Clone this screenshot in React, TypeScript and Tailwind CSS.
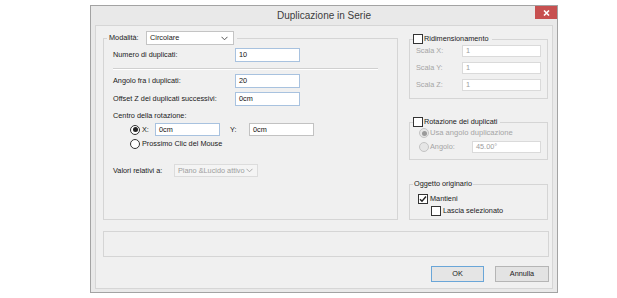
import React from "react";

const font = "font-['Liberation_Sans',Arial,sans-serif]";

function Check({ checked = false, disabled = false }: { checked?: boolean; disabled?: boolean }) {
  return (
    <span
      className={`flex items-center justify-center w-[10px] h-[10px] border bg-white shrink-0 ${
        disabled ? "border-[#bcbcbc]" : "border-[#333333]"
      }`}
    >
      {checked && (
        <svg width="8" height="8" viewBox="0 0 8 8">
          <path d="M1 4.2 L3 6.3 L7 1.5" fill="none" stroke="#222" strokeWidth="1.4" />
        </svg>
      )}
    </span>
  );
}

function Radio({ selected = false, disabled = false }: { selected?: boolean; disabled?: boolean }) {
  return (
    <span
      className={`flex items-center justify-center w-[10px] h-[10px] rounded-full border shrink-0 ${
        disabled ? "border-[#c4c4c4] bg-[#e6e6e6]" : "border-[#333333] bg-white"
      }`}
    >
      {selected && (
        <span className={`w-[5px] h-[5px] rounded-full ${disabled ? "bg-[#9a9a9a]" : "bg-[#222]"}`} />
      )}
    </span>
  );
}

function Chevron({ color = "#555" }: { color?: string }) {
  return (
    <svg width="7" height="5" viewBox="0 0 7 5">
      <path d="M0.5 0.8 L3.5 3.8 L6.5 0.8" fill="none" stroke={color} strokeWidth="1" />
    </svg>
  );
}

function Field({ value, w, blue = false, disabled = false, h = "h-[14px]" }: { value: string; w: string; blue?: boolean; disabled?: boolean; h?: string }) {
  return (
    <div
      className={`${w} ${h} bg-white border flex items-center pl-[3px] ${
        disabled ? "border-[#dadada] text-[#9d9d9d]" : blue ? "border-[#a8c2df] text-[#111]" : "border-[#c2c2c2] text-[#111]"
      }`}
    >
      {value}
    </div>
  );
}

export default function App() {
  return (
    <div className={`w-[617px] h-[298px] bg-white pt-[5px] pl-[90px] text-[7.3px] leading-none text-[#1a1a1a] ${font}`}>
      <div className="w-[468px] h-[288px] border border-[#a3a3a3] bg-[#e9e9e9] flex flex-col">
        {/* title bar */}
        <div className="relative h-[19px] shrink-0 flex items-center justify-center">
          <span className="text-[10px] text-[#3c3c3c]">Duplicazione in Serie</span>
          <div className="absolute right-0 top-0 w-[22px] h-[13px] bg-[#c75050] flex items-center justify-center">
            <svg width="7" height="6" viewBox="0 0 7 6">
              <path d="M1 0.5 L6 5.5 M6 0.5 L1 5.5" stroke="#fff" strokeWidth="1.6" />
            </svg>
          </div>
        </div>

        {/* client */}
        <div className="mx-[4px] mb-[3px] flex-1 border border-[#d6d6d6] bg-[#f0f0f0] pt-[5px] pl-[7px] pr-[4px] flex flex-col">
          <div className="flex gap-[11px] h-[189px]">
            {/* left group */}
            <fieldset className="w-[295px] h-[189px] border border-[#d5d5d5]">
              <legend className="ml-[3px] pl-[2px] pr-[3px] h-[14px] flex items-center">
                <span className="w-[37px]">Modalità:</span>
                <div className="w-[88px] h-[14px] bg-white border border-[#c4c4c4] flex items-center justify-between pl-[3px] pr-[5px]">
                  <span>Circolare</span>
                  <Chevron />
                </div>
              </legend>

              <div className="pl-[9px] pr-[19px] pt-[3px] flex flex-col">
                <div className="flex items-center">
                  <span className="w-[122px]">Numero di duplicati:</span>
                  <Field value="10" w="w-[65px]" blue />
                </div>
                <div className="mt-[6px] border-t border-[#d0d0d0] border-b border-b-white" />
                <div className="mt-[4px] flex items-center">
                  <span className="w-[122px]">Angolo fra i duplicati:</span>
                  <Field value="20" w="w-[65px]" blue />
                </div>
                <div className="mt-[4px] flex items-center">
                  <span className="w-[122px]">Offset Z dei duplicati successivi:</span>
                  <Field value="0cm" w="w-[65px]" blue />
                </div>
                <div className="mt-[5px] h-[10px] flex items-center">Centro della rotazione:</div>
                <div className="mt-[2px] pl-[17px] flex items-center">
                  <Radio selected />
                  <span className="ml-[2px] w-[13px]">X:</span>
                  <Field value="0cm" w="w-[65px]" blue h="h-[13px]" />
                  <span className="ml-[10px] w-[19px]">Y:</span>
                  <Field value="0cm" w="w-[65px]" h="h-[13px]" />
                </div>
                <div className="mt-[2px] pl-[17px] h-[11px] flex items-center">
                  <Radio />
                  <span className="ml-[2px]">Prossimo Clic del Mouse</span>
                </div>
                <div className="mt-[15px] flex items-center">
                  <span className="w-[61px]">Valori relativi a:</span>
                  <div className="w-[84px] h-[13px] bg-[#f4f4f4] border border-[#dcdcdc] text-[#9d9d9d] flex items-center justify-between pl-[3px] pr-[4px]">
                    <span>Piano &amp;Lucido attivo</span>
                    <Chevron color="#aaa" />
                  </div>
                </div>
              </div>
            </fieldset>

            {/* right column */}
            <div className="w-[139px] flex flex-col">
              <fieldset className="mt-[2px] h-[66px] border border-[#d5d5d5]">
                <legend className="ml-[3px] pr-[3px] h-[12px] flex items-center">
                  <Check />
                  <span className="ml-[1px]">Ridimensionamento</span>
                </legend>
                <div className="pl-[6px] flex flex-col gap-[5px] text-[#a5a5a5]">
                  <div className="flex items-center">
                    <span className="w-[46px]">Scala X:</span>
                    <Field value="1" w="w-[79px]" disabled h="h-[12px]" />
                  </div>
                  <div className="flex items-center">
                    <span className="w-[46px]">Scala Y:</span>
                    <Field value="1" w="w-[79px]" disabled h="h-[12px]" />
                  </div>
                  <div className="flex items-center">
                    <span className="w-[46px]">Scala Z:</span>
                    <Field value="1" w="w-[79px]" disabled h="h-[12px]" />
                  </div>
                </div>
              </fieldset>

              <fieldset className="mt-[17px] h-[44px] border border-[#d5d5d5]">
                <legend className="ml-[3px] pr-[3px] h-[12px] flex items-center">
                  <Check />
                  <span className="ml-[1px]">Rotazione dei duplicati</span>
                </legend>
                <div className="pl-[9px] flex flex-col text-[#a5a5a5]">
                  <div className="h-[10px] flex items-center">
                    <Radio selected disabled />
                    <span className="ml-[1px] text-[7.6px]">Usa angolo duplicazione</span>
                  </div>
                  <div className="mt-[3px] flex items-center">
                    <Radio disabled />
                    <span className="ml-[1px] w-[42px]">Angolo:</span>
                    <Field value="45.00°" w="w-[69px]" disabled h="h-[12px]" />
                  </div>
                </div>
              </fieldset>

              <fieldset className="mt-[19px] h-[41px] border border-[#d5d5d5]">
                <legend className="ml-[3px] px-[1px] h-[10px] flex items-center">Oggetto originario</legend>
                <div className="pl-[8px] pt-[5px] flex flex-col gap-[2px]">
                  <div className="flex items-center">
                    <Check checked />
                    <span className="ml-[2px]">Mantieni</span>
                  </div>
                  <div className="pl-[13px] flex items-center">
                    <Check />
                    <span className="ml-[2px]">Lascia selezionato</span>
                  </div>
                </div>
              </fieldset>
            </div>
          </div>

          <div className="mt-[11px] w-[446px] h-[26px] border border-[#d5d5d5]" />

          <div className="mt-[9px] w-[446px] flex justify-end gap-[11px]">
            <div className="w-[53px] h-[16px] border border-[#6aa6d8] bg-[#e5e5e5] flex items-center justify-center">OK</div>
            <div className="w-[54px] h-[16px] border border-[#b5b5b5] bg-[#e3e3e3] flex items-center justify-center">Annulla</div>
          </div>
        </div>
      </div>
    </div>
  );
}
